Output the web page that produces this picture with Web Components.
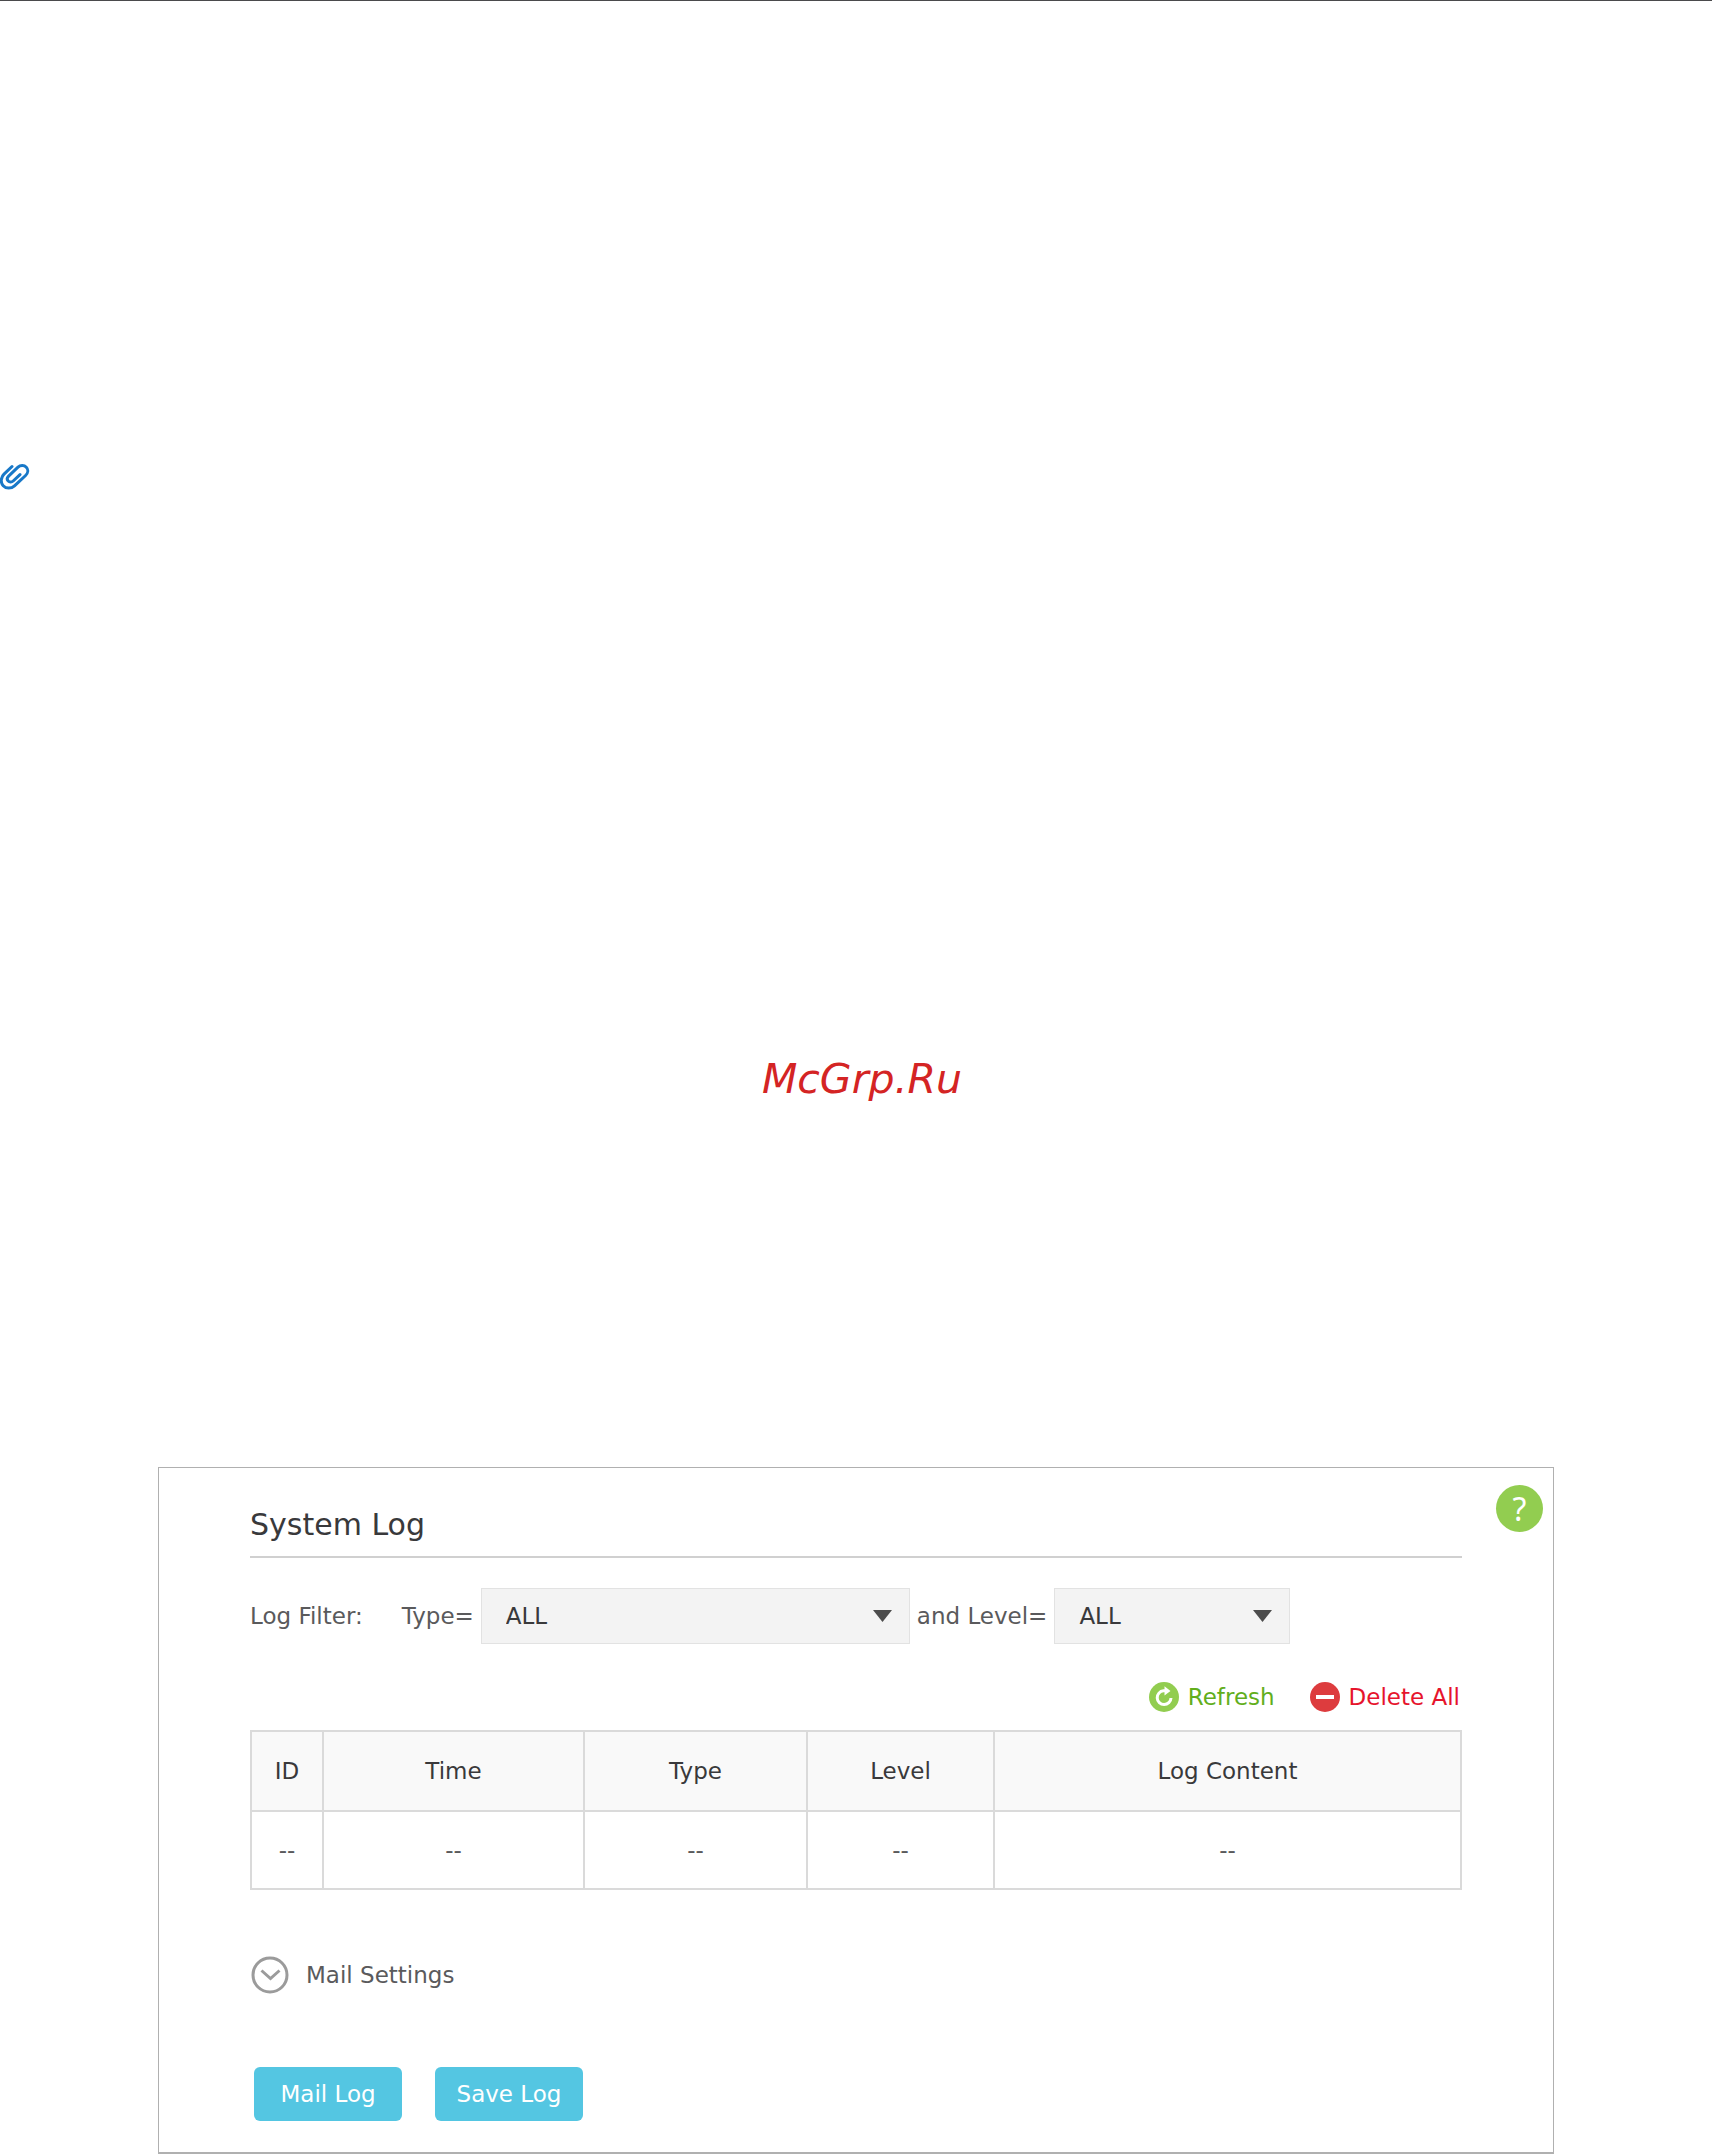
<!DOCTYPE html>
<html lang="en">
<head>
<meta charset="utf-8">
<title>System Log</title>
<style>
  body { margin: 0; background: #fff; color: #5a5a5c; font: 23px/28px "DejaVu Sans", Verdana, sans-serif; }
</style>
</head>
<body>
<manual-page>
  <clip-note></clip-note>
  <site-mark>McGrp.Ru</site-mark>
  <log-panel>
    <log-filter></log-filter>
    <log-actions></log-actions>
    <log-table></log-table>
    <mail-settings>Mail Settings</mail-settings>
    <panel-buttons>
      <action-button>Mail Log</action-button>
      <action-button>Save Log</action-button>
    </panel-buttons>
  </log-panel>
</manual-page>

<script>
const define = (name, html) => customElements.define(name, class extends HTMLElement {
  constructor() {
    super();
    this.attachShadow({ mode: "open" }).innerHTML = html;
  }
});

define("manual-page", `
  <style>
    :host { display: block; border-top: 1px solid #4a4a4c; }
    main { display: flex; flex-direction: column; padding-top: 463px; }
  </style>
  <main><slot></slot></main>`);

define("clip-note", `
  <style>
    :host { display: block; height: 26px; margin-bottom: 563px; }
    svg { display: block; }
  </style>
  <svg width="30" height="26" viewBox="0 0 30 26" fill="none" stroke="#1878c8" stroke-width="3" stroke-linecap="round" aria-hidden="true">
    <path d="M12 2.500L4 10.200C.8 13.300.3 18.500 3.200 21.700C6 24.900 11.300 24.800 14.500 21.800L25.600 11.500C28.200 9 28.400 5.400 26.300 3.200C24.100.9 20.400 1 18 3.200L8.600 12.100C7 13.700 6.900 15.700 8.200 17.100C9.500 18.500 11.700 18.400 13.200 17L20 10.600"/>
  </svg>`);

define("site-mark", `
  <style>
    :host { display: block; padding-left: 12px; text-align: center; font-size: 41px; line-height: 52px; font-style: italic; color: #d42424; margin-bottom: 362px; }
  </style>
  <slot></slot>`);

define("log-panel", `
  <style>
    :host { display: block; margin: 0 158px; border: 1px solid #b0b0b0; border-bottom-width: 2px; }
    section { position: relative; padding: 39px 91px 31px; }
    h1 { margin: 0; padding-bottom: 13px; border-bottom: 2px solid #d0d0d0; font-size: 30px; line-height: 36px; font-weight: 400; color: #39393b; }
    .help { position: absolute; top: 17px; right: 10px; width: 47px; height: 47px; padding: 0; border: 0; border-radius: 50%; background: #92cd50; color: #fff; font: 32px/47px "Noto Sans", sans-serif; }
  </style>
  <section>
    <h1>System Log</h1>
    <slot></slot>
    <button class="help" type="button">?</button>
  </section>`);

define("log-filter", `
  <style>
    :host { display: flex; align-items: center; margin-top: 30px; white-space: nowrap; }
    .name { margin-right: 39px; }
    .pick { display: grid; align-items: center; margin: 0 7px; }
    .pick > * { grid-area: 1 / 1; }
    .type { width: 429px; }
    .level { width: 236px; }
    select { appearance: none; box-sizing: border-box; width: 100%; height: 56px; margin: 0; padding: 0 24px; border: 1px solid #e2e2e2; border-radius: 0; background: #f3f3f3; color: #39393b; font: inherit; }
    svg { justify-self: end; margin-right: 18px; pointer-events: none; }
  </style>
  <span class="name">Log Filter:</span>
  <label for="type">Type=</label>
  <span class="pick type">
    <select id="type"><option>ALL</option></select>
    <svg width="19" height="12" viewBox="0 0 19 12" aria-hidden="true"><path d="M0 0H19L9.500 12Z" fill="#4c4c4c"/></svg>
  </span>
  <label for="level">and Level=</label>
  <span class="pick level">
    <select id="level"><option>ALL</option></select>
    <svg width="19" height="12" viewBox="0 0 19 12" aria-hidden="true"><path d="M0 0H19L9.500 12Z" fill="#4c4c4c"/></svg>
  </span>`);

define("log-actions", `
  <style>
    :host { display: flex; justify-content: flex-end; gap: 35px; margin-top: 38px; padding-right: 2px; }
    button { display: flex; align-items: center; gap: 9px; padding: 0; border: 0; background: none; font: inherit; color: #62ae1c; }
    .delete { color: #e6142c; }
  </style>
  <button type="button">
    <svg width="30" height="30" viewBox="0 0 30 30" aria-hidden="true">
      <circle cx="15" cy="15" r="15" fill="#92cd50"/>
      <path d="M16.500 8.800H14.500A6.900 6.900 0 1 0 22 16" fill="none" stroke="#fff" stroke-width="3"/>
      <path d="M15.500 4.200L21.500 9L15.500 13.600Z" fill="#fff"/>
    </svg>Refresh
  </button>
  <button class="delete" type="button">
    <svg width="30" height="30" viewBox="0 0 30 30" aria-hidden="true">
      <circle cx="15" cy="15" r="15" fill="#dd3c3e"/>
      <path d="M6 15H24" stroke="#fff" stroke-width="4"/>
    </svg>Delete All
  </button>`);

define("log-table", `
  <style>
    :host { display: block; margin-top: 18px; }
    table { width: 100%; table-layout: fixed; border-collapse: collapse; text-align: center; }
    th, td { padding: 0; border: 2px solid #dadada; font-weight: 400; }
    th { height: 78px; background: #f9f9f9; color: #39393b; }
    td { height: 76px; color: #5a5a5c; }
    .id { width: 70px; } .time { width: 259px; } .type { width: 221px; } .level { width: 185px; }
  </style>
  <table>
    <thead><tr><th class="id">ID</th><th class="time">Time</th><th class="type">Type</th><th class="level">Level</th><th>Log Content</th></tr></thead>
    <tbody><tr><td>--</td><td>--</td><td>--</td><td>--</td><td>--</td></tr></tbody>
  </table>`);

define("mail-settings", `
  <style>
    :host { display: flex; margin-top: 66px; padding-left: 1px; }
    button { display: flex; align-items: center; gap: 17px; padding: 0; border: 0; background: none; font: inherit; color: inherit; }
  </style>
  <button type="button" aria-expanded="false">
    <svg width="38" height="38" viewBox="0 0 38 38" fill="none" stroke="#9b9b9b" stroke-width="3" aria-hidden="true">
      <circle cx="19" cy="19" r="17"/>
      <path d="M10.500 14.500L19.500 22.500L28.500 14.500"/>
    </svg>
    <slot></slot>
  </button>`);

define("panel-buttons", `
  <style>:host { display: flex; gap: 33px; margin-top: 73px; padding-left: 4px; }</style>
  <slot></slot>`);

define("action-button", `
  <style>
    :host { display: block; }
    button { width: 148px; height: 54px; padding: 0; border: 0; border-radius: 6px; background: #54c6e2; color: #fff; font: inherit; }
  </style>
  <button type="button"><slot></slot></button>`);
</script>
</body>
</html>
